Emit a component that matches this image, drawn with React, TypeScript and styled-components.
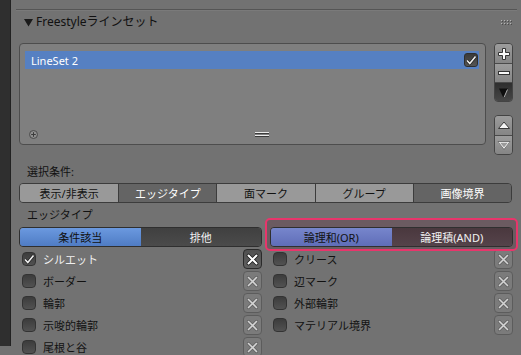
import React from "react";
import styled, { createGlobalStyle } from "styled-components";

const Global = createGlobalStyle`
  html, body { margin: 0; padding: 0; background: #727272; }
  body {
    font-family: "Noto Sans", "Noto Sans CJK JP", sans-serif;
    font-size: 11px;
    color: #111;
  }
  * { box-sizing: border-box; }
`;

const Page = styled.div`
  display: flex;
  width: 521px;
  height: 355px;
  overflow: hidden;
  background: #727272;
`;

const SideStrip = styled.div`
  width: 11px;
  flex: none;
  display: flex;
  flex-direction: column;
`;

const SideDark = styled.div`
  height: 346px;
  background: #2f2f2f;
  border-right: 1px solid #222;
`;

const Main = styled.div`
  flex: 1;
  display: flex;
  flex-direction: column;
  padding-top: 9px;
`;

const Separator = styled.div`
  margin: 0 4px 0 5px;
  border-top: 1px solid #555;
  border-bottom: 1px solid #7a7a7a;
`;

const Header = styled.div`
  height: 22px;
  display: flex;
  align-items: center;
  gap: 3px;
  padding: 0 9px 0 13px;
  font-size: 12px;
  color: #111;
`;

const HeaderTitle = styled.span`
  flex: 1;
  line-height: 22px;
`;

const Body = styled.div`
  display: flex;
  flex-direction: column;
  padding: 10px 0 0 8px;
`;

const ListSection = styled.div`
  display: flex;
  align-items: flex-start;
  gap: 8px;
`;

const ListBox = styled.div`
  width: 467px;
  height: 102px;
  border: 1px solid #4d4d4d;
  border-radius: 4px;
  background: #7f7f7f;
  display: flex;
  flex-direction: column;
  padding: 7px 6px 5px 5px;
`;

const ListRow = styled.div`
  height: 18px;
  background: #5680c2;
  display: flex;
  align-items: center;
  padding: 0 1px 0 6px;
  color: #fff;
`;

const ListRowText = styled.span`
  flex: 1;
`;

const RowCheck = styled.div`
  width: 14px;
  height: 14px;
  border-radius: 3px;
  background: linear-gradient(#3a3a3a, #555);
  border: 1px solid #2e2e2e;
  display: flex;
  align-items: center;
  justify-content: center;
`;

const ListFooter = styled.div`
  margin-top: auto;
  height: 10px;
  display: flex;
  align-items: center;
  padding-left: 4px;
`;

const Grip = styled.div`
  margin-left: 217px;
  display: flex;
`;

const ButtonColumn = styled.div`
  width: 19px;
  display: flex;
  flex-direction: column;
  gap: 13px;
`;

const ButtonGroup = styled.div`
  display: flex;
  flex-direction: column;
  border: 1px solid #444;
  border-radius: 4px;
  overflow: hidden;
`;

const SideButton = styled.div<{ $dark?: boolean }>`
  height: 19px;
  display: flex;
  align-items: center;
  justify-content: center;
  background: ${(p) =>
    p.$dark ? "linear-gradient(#2e2e2e, #474747)" : "linear-gradient(#9c9c9c, #858585)"};
  & + & {
    border-top: 1px solid #4a4a4a;
  }
`;

const SectionLabel = styled.div<{ $top: number }>`
  height: 20px;
  line-height: 20px;
  padding-left: 8px;
  margin-top: ${(p) => p.$top}px;
  color: #111;
`;

const Tabs = styled.div`
  margin-top: 1px;
  width: 493px;
  height: 20px;
  display: grid;
  grid-template-columns: repeat(5, 1fr);
  border: 1px solid #3c3c3c;
  border-radius: 4px;
  overflow: hidden;
`;

const Tab = styled.div<{ $active?: boolean }>`
  display: flex;
  align-items: center;
  justify-content: center;
  background: ${(p) => (p.$active ? "#646464" : "#999")};
  color: ${(p) => (p.$active ? "#fff" : "#111")};
  & + & {
    border-left: 1px solid #3c3c3c;
  }
`;

const ConditionRow = styled.div`
  margin-top: 2px;
  display: flex;
  gap: 8px;
  height: 20px;
`;

const Segmented = styled.div`
  position: relative;
  width: 243px;
  height: 20px;
  display: grid;
  grid-template-columns: 1fr 1fr;
  border: 1px solid #2f2f2f;
  border-radius: 4px;
  overflow: hidden;
`;

type SegKind = "blue" | "dark" | "pinkBlue" | "pinkDark";

const segBg: Record<SegKind, string> = {
  blue: "linear-gradient(#6b99df, #4f7cc4)",
  dark: "linear-gradient(#404040, #4b4b4b)",
  pinkBlue: "linear-gradient(#7786cc, #5f6db8)",
  pinkDark: "linear-gradient(#4a383e, #55434a)",
};

const Segment = styled.div<{ $kind: SegKind }>`
  display: flex;
  align-items: center;
  justify-content: center;
  background: ${(p) => segBg[p.$kind]};
  color: ${(p) => (p.$kind === "blue" || p.$kind === "pinkBlue" ? "#111" : "#f2f2f2")};
`;

const HighlightWrap = styled.div`
  position: relative;
  width: 243px;
`;

const Highlight = styled.div`
  position: absolute;
  top: -9px;
  left: -5px;
  right: -5px;
  bottom: -4px;
  border: 2px solid #e8356b;
  border-radius: 5px;
  background: #6b5b61;
`;

const CheckGrid = styled.div`
  margin-top: 2px;
  display: grid;
  grid-template-columns: 243px 243px;
  column-gap: 8px;
  row-gap: 2px;
  grid-auto-flow: column;
  grid-template-rows: repeat(5, 20px);
`;

const CheckRow = styled.div`
  display: flex;
  align-items: center;
  padding-left: 3px;
`;

const CheckBox = styled.div`
  width: 14px;
  height: 14px;
  border-radius: 4px;
  background: linear-gradient(#3c3c3c, #525252);
  border: 1px solid #333;
  display: flex;
  align-items: center;
  justify-content: center;
`;

const CheckLabel = styled.span<{ $on?: boolean }>`
  flex: 1;
  margin-left: 7px;
  color: ${(p) => (p.$on ? "#f0f0f0" : "#111")};
`;

const XButton = styled.div<{ $active?: boolean }>`
  width: 19px;
  height: 20px;
  border-radius: 4px;
  display: flex;
  align-items: center;
  justify-content: center;
  background: ${(p) => (p.$active ? "linear-gradient(#505050, #606060)" : "#7b7b7b")};
  border: 1px solid ${(p) => (p.$active ? "#2a2a2a" : "#5c5c5c")};
`;

const Check = () => (
  <svg width="12" height="11" viewBox="0 0 12 11">
    <path d="M2 5.5 L4.8 8.5 L10.5 1.5" stroke="#202020" strokeWidth="3" fill="none" />
    <path d="M2 5.5 L4.8 8.5 L10.5 1.5" stroke="#eee" strokeWidth="1.6" fill="none" />
  </svg>
);

const XIcon = ({ active }: { active?: boolean }) => (
  <svg width="13" height="13" viewBox="0 0 13 13">
    <path d="M2.5 2.5 L10.5 10.5 M10.5 2.5 L2.5 10.5" stroke={active ? "#1c1c1c" : "#666"} strokeWidth={active ? 3.6 : 3.2} strokeLinecap="round" />
    <path d="M2.5 2.5 L10.5 10.5 M10.5 2.5 L2.5 10.5" stroke={active ? "#fff" : "#d4d4d4"} strokeWidth={active ? 2 : 1.6} strokeLinecap="round" />
  </svg>
);

const Tri = () => (
  <svg width="9" height="9" viewBox="0 0 9 9">
    <polygon points="0,1 9,1 4.5,8.5" fill="#1a1a1a" />
  </svg>
);

const Dots = () => (
  <svg width="11" height="5" viewBox="0 0 11 5">
    {[0, 3, 6, 9].map((x) =>
      [0, 3].map((y) => (
        <g key={`${x}-${y}`}>
          <rect x={x + 1} y={y + 1} width="1" height="1" fill="#4a4a4a" />
          <rect x={x} y={y} width="1" height="1" fill="#b5b5b5" />
        </g>
      ))
    )}
  </svg>
);

const PlusCircle = () => (
  <svg width="9" height="9" viewBox="0 0 9 9">
    <circle cx="4.5" cy="4.5" r="4" fill="#8e8e8e" stroke="#4a4a4a" strokeWidth="1" />
    <path d="M4.5 2.2 V6.8 M2.2 4.5 H6.8" stroke="#3a3a3a" strokeWidth="1" />
  </svg>
);

const GripIcon = () => (
  <svg width="14" height="5" viewBox="0 0 14 5">
    <rect x="0" y="0" width="14" height="1" fill="#eaeaea" />
    <rect x="0" y="1" width="14" height="1" fill="#3a3a3a" />
    <rect x="0" y="3" width="14" height="1" fill="#eaeaea" />
    <rect x="0" y="4" width="14" height="1" fill="#3a3a3a" />
  </svg>
);

const PlusIcon = () => (
  <svg width="14" height="14" viewBox="0 0 14 14">
    <path d="M5.5 1.5h3v4h4v3h-4v4h-3v-4h-4v-3h4z" fill="#fafafa" stroke="#333" strokeWidth="1" />
  </svg>
);

const MinusIcon = () => (
  <svg width="14" height="14" viewBox="0 0 14 14">
    <rect x="1.5" y="5.5" width="11" height="3" fill="#fafafa" stroke="#333" strokeWidth="1" />
  </svg>
);

const FilterIcon = () => (
  <svg width="13" height="13" viewBox="0 0 13 13">
    <polygon points="2,2.5 11,2.5 7.5,11 6,11" fill="#0e0e0e" />
    <path d="M10.5 3.5 L7.2 11" stroke="#b0b0b0" strokeWidth="1" />
  </svg>
);

const UpIcon = () => (
  <svg width="14" height="14" viewBox="0 0 14 14">
    <polygon points="7,3 12.5,9.5 1.5,9.5" fill="#f5f5f5" stroke="#3a3a3a" strokeWidth="1" />
  </svg>
);

const DownIcon = () => (
  <svg width="14" height="14" viewBox="0 0 14 14">
    <polygon points="1.8,4.2 12.2,4.2 7,10.5" fill="#9a9a9a" stroke="#f5f5f5" strokeWidth="1.3" />
    <polygon points="0.9,3.5 13.1,3.5 7,11.4" fill="none" stroke="#3a3a3a" strokeWidth="0.6" />
  </svg>
);

const tabs = [
  { label: "表示/非表示", active: false },
  { label: "エッジタイプ", active: true },
  { label: "面マーク", active: false },
  { label: "グループ", active: false },
  { label: "画像境界", active: true },
];

const edges = [
  { label: "シルエット", on: true },
  { label: "ボーダー", on: false },
  { label: "輪郭", on: false },
  { label: "示唆的輪郭", on: false },
  { label: "尾根と谷", on: false },
  { label: "クリース", on: false },
  { label: "辺マーク", on: false },
  { label: "外部輪郭", on: false },
  { label: "マテリアル境界", on: false },
];

export default function App() {
  return (
    <>
      <Global />
      <Page>
        <SideStrip>
          <SideDark />
        </SideStrip>
        <Main>
          <Separator />
          <Header>
            <Tri />
            <HeaderTitle>Freestyleラインセット</HeaderTitle>
            <Dots />
          </Header>
          <Body>
            <ListSection>
              <ListBox>
                <ListRow>
                  <ListRowText>LineSet 2</ListRowText>
                  <RowCheck>
                    <Check />
                  </RowCheck>
                </ListRow>
                <ListFooter>
                  <PlusCircle />
                  <Grip>
                    <GripIcon />
                  </Grip>
                </ListFooter>
              </ListBox>
              <ButtonColumn>
                <ButtonGroup>
                  <SideButton>
                    <PlusIcon />
                  </SideButton>
                  <SideButton>
                    <MinusIcon />
                  </SideButton>
                  <SideButton $dark>
                    <FilterIcon />
                  </SideButton>
                </ButtonGroup>
                <ButtonGroup>
                  <SideButton>
                    <UpIcon />
                  </SideButton>
                  <SideButton>
                    <DownIcon />
                  </SideButton>
                </ButtonGroup>
              </ButtonColumn>
            </ListSection>

            <SectionLabel $top={7}>選択条件:</SectionLabel>
            <Tabs>
              {tabs.map((t) => (
                <Tab key={t.label} $active={t.active}>
                  {t.label}
                </Tab>
              ))}
            </Tabs>

            <SectionLabel $top={2}>エッジタイプ</SectionLabel>
            <ConditionRow>
              <Segmented>
                <Segment $kind="blue">条件該当</Segment>
                <Segment $kind="dark">排他</Segment>
              </Segmented>
              <HighlightWrap>
                <Highlight />
                <Segmented>
                  <Segment $kind="pinkBlue">論理和(OR)</Segment>
                  <Segment $kind="pinkDark">論理積(AND)</Segment>
                </Segmented>
              </HighlightWrap>
            </ConditionRow>

            <CheckGrid>
              {edges.map((e, i) => (
                <CheckRow key={e.label}>
                  <CheckBox>{e.on && <Check />}</CheckBox>
                  <CheckLabel $on={e.on}>{e.label}</CheckLabel>
                  <XButton $active={i === 0}>
                    <XIcon active={i === 0} />
                  </XButton>
                </CheckRow>
              ))}
            </CheckGrid>
          </Body>
        </Main>
      </Page>
    </>
  );
}
